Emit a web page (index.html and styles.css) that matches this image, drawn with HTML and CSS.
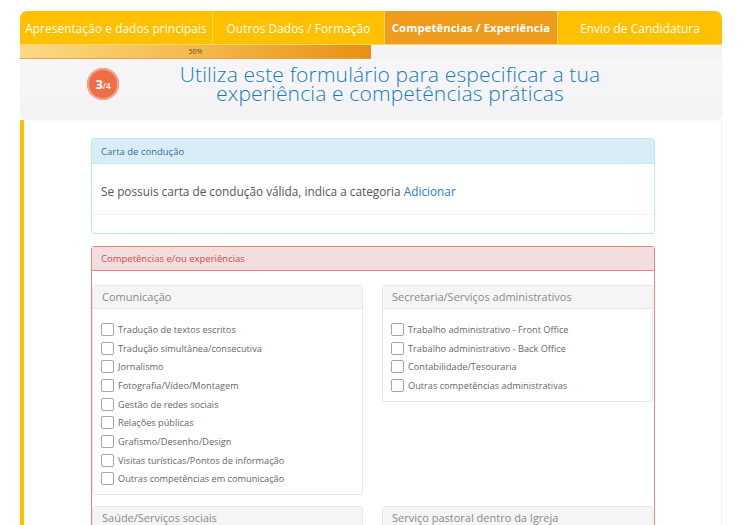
FILE: index.html
```html
<!DOCTYPE html>
<html lang="pt">
<head>
<meta charset="utf-8">
<title>Candidatura</title>
<link rel="stylesheet" href="styles.css">
</head>
<body>
<div class="page">
  <nav class="tabs">
    <div class="tab t1">Apresentação e dados principais</div>
    <div class="tab t2">Outros Dados / Formação</div>
    <div class="tab t3 active">Competências / Experiência</div>
    <div class="tab t4">Envio de Candidatura</div>
  </nav>
  <div class="progress"><div class="bar" style="width:50%">50%</div></div>
  <header class="hero">
    <div class="badge"><span class="num">3</span><span class="den">/4</span></div>
    <h1 class="title">Utiliza este formulário para especificar a tua<br>experiência e competências práticas</h1>
  </header>
  <main class="content">
    <section class="panel info">
      <div class="panel-head">Carta de condução</div>
      <div class="panel-body">Se possuis carta de condução válida, indica a categoria <a class="link" href="#">Adicionar</a></div>
      <div class="panel-foot"></div>
    </section>
    <section class="panel danger">
      <div class="panel-head">Competências e/ou experiências</div>
      <div class="grid">
        <div class="sub">
          <div class="sub-head">Comunicação</div>
          <ul class="checks">
            <li><span class="box"></span>Tradução de textos escritos</li>
            <li><span class="box"></span>Tradução simultânea/consecutiva</li>
            <li><span class="box"></span>Jornalismo</li>
            <li><span class="box"></span>Fotografia/Vídeo/Montagem</li>
            <li><span class="box"></span>Gestão de redes sociais</li>
            <li><span class="box"></span>Relações públicas</li>
            <li><span class="box"></span>Grafismo/Desenho/Design</li>
            <li><span class="box"></span>Visitas turísticas/Pontos de informação</li>
            <li><span class="box"></span>Outras competências em comunicação</li>
          </ul>
        </div>
        <div class="sub">
          <div class="sub-head">Secretaria/Serviços administrativos</div>
          <ul class="checks">
            <li><span class="box"></span>Trabalho administrativo - Front Office</li>
            <li><span class="box"></span>Trabalho administrativo - Back Office</li>
            <li><span class="box"></span>Contabilidade/Tesouraria</li>
            <li><span class="box"></span>Outras competências administrativas</li>
          </ul>
        </div>
        <div class="sub">
          <div class="sub-head">Saúde/Serviços sociais</div>
        </div>
        <div class="sub">
          <div class="sub-head">Serviço pastoral dentro da Igreja</div>
        </div>
      </div>
    </section>
  </main>
</div>
</body>
</html>
```

FILE: styles.css
```css
* { box-sizing: border-box; }
html, body { margin: 0; padding: 0; background: #fff; }
body {
  font-family: "Open Sans", "Noto Sans", "DejaVu Sans", sans-serif;
  color: #555;
  overflow: hidden;
  height: 525px;
}
.page {
  width: 702px;
  margin: 11px 0 0 20px;
}
.tabs {
  display: grid;
  grid-template-columns: 193px 172px 173px 164px;
  height: 34px;
  background: #ffc000;
  border-radius: 7px 7px 0 0;
  overflow: hidden;
  border-bottom: 1px solid #ffd765;
}
.tab {
  display: flex;
  align-items: center;
  justify-content: center;
  color: #fff;
  font-size: 11.8px;
  letter-spacing: 0.1px;
  white-space: nowrap;
  border-right: 1px solid #ffd86a;
}
.tab.t4 { border-right: 0; }
.tab.active {
  background: #ef9c1c;
  font-weight: 700;
  font-size: 11.3px;
}
.progress {
  height: 14px;
  background: #f4f4f7;
}
.bar {
  height: 14px;
  background: linear-gradient(90deg, #fbd985 0%, #f4b94c 50%, #e98f15 100%);
  font-size: 7px;
  line-height: 14px;
  text-align: center;
  color: #5e4e30;
  border-bottom: 1px solid #e6a33a;
}
.hero {
  display: flex;
  align-items: center;
  height: 61px;
  padding: 0 61px 11px 67px;
  background: linear-gradient(180deg, #f6f6f9 0%, #f3f3f6 100%);
  border-radius: 0 0 6px 6px;
  box-shadow: 0 1px 2px rgba(0,0,0,0.03);
}
.badge {
  flex: 0 0 32px;
  width: 32px;
  height: 32px;
  border-radius: 50%;
  background: #ee6f47;
  box-shadow: 0 0 0 2px #f4a58c inset;
  display: flex;
  align-items: center;
  justify-content: center;
  color: #fff;
  font-weight: 700;
}
.badge .num { font-size: 13px; }
.badge .den { font-size: 8px; margin-top: 3px; font-weight: 600; }
.title {
  flex: 1;
  margin: 0;
  text-align: center;
  font-weight: 300;
  font-size: 21px;
  line-height: 19.5px;
  color: #1a7ac0;
  letter-spacing: 0.15px;
}
.content {
  border-left: 4px solid #ffc000;
  border-right: 1px solid #f1f1f1;
  padding: 18px 66px 0 67px;
  min-height: 420px;
}
.panel {
  border: 1px solid #bce8f1;
  border-radius: 3px;
  background: #fff;
}
.panel-head {
  height: 25px;
  padding: 0 9px;
  display: flex;
  align-items: center;
  font-size: 9.5px;
}
.info .panel-head {
  background: #d9edf7;
  color: #31708f;
  border-bottom: 1px solid #bce8f1;
}
.info .panel-body {
  padding: 19px 9px 14px;
  font-size: 11.8px;
  line-height: 17px;
  color: #555;
}
.link { color: #2a7cc7; text-decoration: none; }
.info .panel-foot {
  height: 19px;
  border-top: 1px solid #f2f2f2;
}
.danger {
  margin-top: 12px;
  border-color: #e8837e;
}
.danger .panel-head {
  height: 24px;
  background: #f2dede;
  color: #d94848;
  border-bottom: 1px solid #e8837e;
}
.grid {
  display: grid;
  grid-template-columns: 1fr 1fr;
  column-gap: 19px;
  row-gap: 11px;
  padding: 14px 1px 0 0;
  align-items: start;
}
.sub {
  border: 1px solid #e6e6e6;
  border-radius: 3px;
  background: #fff;
}
.sub-head {
  height: 23px;
  background: #f5f5f5;
  border-bottom: 1px solid #e6e6e6;
  padding: 0 9px 2px;
  display: flex;
  align-items: center;
  color: #8a8a8a;
  font-size: 11px;
}
.checks {
  list-style: none;
  margin: 0;
  padding: 11px 8px 6px;
}
.checks li {
  display: flex;
  align-items: center;
  height: 18.7px;
  font-size: 9.2px;
  color: #666;
  white-space: nowrap;
}
.box {
  flex: 0 0 13px;
  width: 13px;
  height: 13px;
  border: 1px solid #a5a5a5;
  border-radius: 2px;
  margin-right: 4px;
  background: #fff;
}
```
